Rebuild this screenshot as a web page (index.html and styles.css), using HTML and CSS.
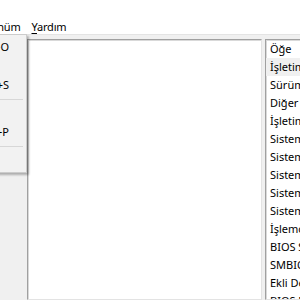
FILE: index.html
```html
<!DOCTYPE html>
<html lang="tr">
<head>
    <meta charset="UTF-8">
    <title>Sistem Bilgisi</title>
    <link rel="stylesheet" href="styles.css">
</head>
<body>

<div class="window">
    <div class="titlebar"></div>

    <div class="menubar">
        <span class="menu-item first">Görünüm</span>
        <span class="menu-item"><u>Y</u>ardım</span>
    </div>

    <div class="workspace">
        <div class="pane pane-left"></div>
        <div class="pane pane-right">
            <div class="row head">Öğe</div>
            <div class="row selected">İşletim Sistemi Adı</div>
            <div class="row">Sürüm</div>
            <div class="row">Diğer OS Açıklaması</div>
            <div class="row">İşletim Sistemi Üreticisi</div>
            <div class="row">Sistem Adı</div>
            <div class="row">Sistem Üreticisi</div>
            <div class="row">Sistem Modeli</div>
            <div class="row">Sistem Türü</div>
            <div class="row">Sistem SKU'su</div>
            <div class="row">İşlemci</div>
            <div class="row">BIOS Sürümü/Tarihi</div>
            <div class="row">SMBIOS Sürümü</div>
            <div class="row">Ekli Denetleyici Sürümü</div>
            <div class="row">BIOS Modu</div>
        </div>
    </div>

    <!-- açık menü -->
    <div class="dropdown">
        <div class="dd-item"><span>Aç...</span><span>Ctrl+O</span></div>
        <div class="dd-item"><span>Kapat</span><span></span></div>
        <div class="dd-item"><span>Kaydet</span><span>Ctrl+S</span></div>
        <div class="dd-sep"></div>
        <div class="dd-item"><span>Dışarı Aktar...</span><span></span></div>
        <div class="dd-item"><span>Yazdır...</span><span>Ctrl+P</span></div>
        <div class="dd-sep"></div>
        <div class="dd-item"><span>Çıkış</span><span></span></div>
    </div>
</div>

</body>
</html>
```

FILE: styles.css
```css
body {
    margin: 0;
    font-family: "Noto Sans", "Open Sans", sans-serif;
    font-size: 11px;
    color: #000;
    background-color: #fff;
}
.window {
    position: relative;
    width: 300px;
    height: 300px;
    overflow: hidden;
    display: flex;
    flex-direction: column;
}
.titlebar {
    height: 20px;
    background-color: #fff;
}
.menubar {
    height: 14px;
    display: flex;
    align-items: center;
    gap: 11px;
    background-color: #fff;
    white-space: nowrap;
    letter-spacing: -0.2px;
}
.menu-item {
    line-height: 14px;
}
.menu-item.first {
    margin-left: -28px;
}
.menu-item u {
    text-decoration-thickness: 1px;
    text-underline-offset: 2px;
}
.workspace {
    flex: 1;
    display: flex;
    gap: 3px;
    padding-top: 4px;
    padding-left: 27px;
    background-color: #f0f0f0;
    border-top: 1px solid #e4e4e4;
    min-height: 0;
}
.pane {
    background-color: #fff;
    border: 1px solid #a0a0a0;
    border-right-color: #e3e3e3;
    border-bottom-color: #e3e3e3;
    box-shadow: inset 1px 1px 0 #d9d9d9;
}
.pane-left {
    width: 233px;
}
.pane-right {
    flex: 1;
    border-right: none;
    overflow: hidden;
    white-space: nowrap;
}
.row {
    height: 18px;
    line-height: 18px;
    padding-left: 4px;
}
.row.selected {
    background-color: #f0f0f0;
}
.dropdown {
    position: absolute;
    top: 34px;
    left: -173px;
    width: 198px;
    padding: 3px 0 2px;
    background-color: #f2f2f2;
    border: 1px solid #cccccc;
    box-shadow: 2px 2px 2px rgba(0, 0, 0, 0.28);
    white-space: nowrap;
}
.dd-item {
    display: flex;
    justify-content: space-between;
    height: 19px;
    line-height: 18px;
    padding-right: 17px;
}
.dd-sep {
    height: 1px;
    margin: 4px 3px 4px 0;
    background-color: #d7d7d7;
}
```
